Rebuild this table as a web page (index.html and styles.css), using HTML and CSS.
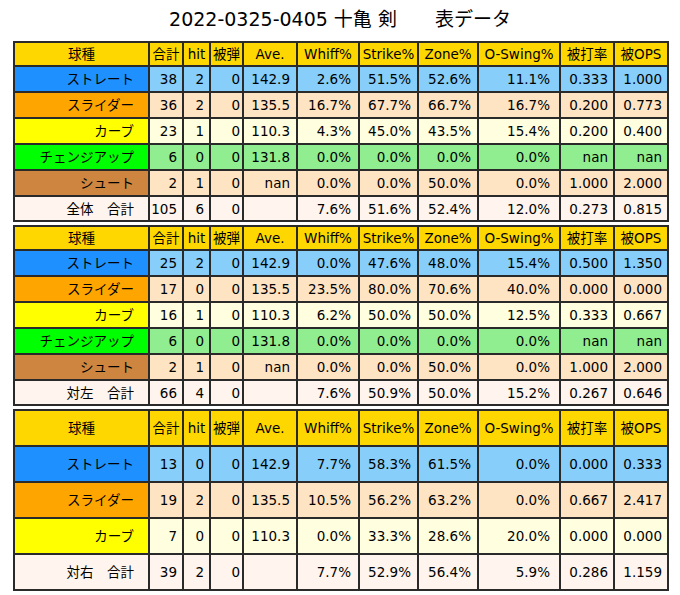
FILE: index.html
```html
<!DOCTYPE html>
<html lang="ja">
<head>
<meta charset="utf-8">
<title>2022-0325-0405 十亀 剣 表データ</title>
<link rel="stylesheet" href="styles.css">
</head>
<body>
<div class="page">
  <h1 class="title">2022-0325-0405 十亀 剣　　表データ</h1>
  <div class="tables">
    <table class="stats short">
      <colgroup>
        <col class="w-type"><col class="w-n"><col class="w-hit"><col class="w-hbp"><col class="w-ave"><col class="w-whiff"><col class="w-strike"><col class="w-zone"><col class="w-oswing"><col class="w-avg"><col class="w-ops">
      </colgroup>
      <tr class="head"><th>球種</th><th>合計</th><th>hit</th><th>被弾</th><th>Ave.</th><th>Whiff%</th><th>Strike%</th><th>Zone%</th><th>O-Swing%</th><th>被打率</th><th>被OPS</th></tr>
      <tr class="fb"><th>ストレート</th><td>38</td><td>2</td><td>0</td><td>142.9</td><td>2.6%</td><td>51.5%</td><td>52.6%</td><td>11.1%</td><td>0.333</td><td>1.000</td></tr>
      <tr class="sl"><th>スライダー</th><td>36</td><td>2</td><td>0</td><td>135.5</td><td>16.7%</td><td>67.7%</td><td>66.7%</td><td>16.7%</td><td>0.200</td><td>0.773</td></tr>
      <tr class="cb"><th>カーブ</th><td>23</td><td>1</td><td>0</td><td>110.3</td><td>4.3%</td><td>45.0%</td><td>43.5%</td><td>15.4%</td><td>0.200</td><td>0.400</td></tr>
      <tr class="ch"><th>チェンジアップ</th><td>6</td><td>0</td><td>0</td><td>131.8</td><td>0.0%</td><td>0.0%</td><td>0.0%</td><td>0.0%</td><td>nan</td><td>nan</td></tr>
      <tr class="sh"><th>シュート</th><td>2</td><td>1</td><td>0</td><td>nan</td><td>0.0%</td><td>0.0%</td><td>50.0%</td><td>0.0%</td><td>1.000</td><td>2.000</td></tr>
      <tr class="total last"><th>全体　合計</th><td>105</td><td>6</td><td>0</td><td></td><td>7.6%</td><td>51.6%</td><td>52.4%</td><td>12.0%</td><td>0.273</td><td>0.815</td></tr>
    </table>
    <table class="stats short">
      <colgroup>
        <col class="w-type"><col class="w-n"><col class="w-hit"><col class="w-hbp"><col class="w-ave"><col class="w-whiff"><col class="w-strike"><col class="w-zone"><col class="w-oswing"><col class="w-avg"><col class="w-ops">
      </colgroup>
      <tr class="head"><th>球種</th><th>合計</th><th>hit</th><th>被弾</th><th>Ave.</th><th>Whiff%</th><th>Strike%</th><th>Zone%</th><th>O-Swing%</th><th>被打率</th><th>被OPS</th></tr>
      <tr class="fb"><th>ストレート</th><td>25</td><td>2</td><td>0</td><td>142.9</td><td>0.0%</td><td>47.6%</td><td>48.0%</td><td>15.4%</td><td>0.500</td><td>1.350</td></tr>
      <tr class="sl"><th>スライダー</th><td>17</td><td>0</td><td>0</td><td>135.5</td><td>23.5%</td><td>80.0%</td><td>70.6%</td><td>40.0%</td><td>0.000</td><td>0.000</td></tr>
      <tr class="cb"><th>カーブ</th><td>16</td><td>1</td><td>0</td><td>110.3</td><td>6.2%</td><td>50.0%</td><td>50.0%</td><td>12.5%</td><td>0.333</td><td>0.667</td></tr>
      <tr class="ch"><th>チェンジアップ</th><td>6</td><td>0</td><td>0</td><td>131.8</td><td>0.0%</td><td>0.0%</td><td>0.0%</td><td>0.0%</td><td>nan</td><td>nan</td></tr>
      <tr class="sh"><th>シュート</th><td>2</td><td>1</td><td>0</td><td>nan</td><td>0.0%</td><td>0.0%</td><td>50.0%</td><td>0.0%</td><td>1.000</td><td>2.000</td></tr>
      <tr class="total last"><th>対左　合計</th><td>66</td><td>4</td><td>0</td><td></td><td>7.6%</td><td>50.9%</td><td>50.0%</td><td>15.2%</td><td>0.267</td><td>0.646</td></tr>
    </table>
    <table class="stats tall">
      <colgroup>
        <col class="w-type"><col class="w-n"><col class="w-hit"><col class="w-hbp"><col class="w-ave"><col class="w-whiff"><col class="w-strike"><col class="w-zone"><col class="w-oswing"><col class="w-avg"><col class="w-ops">
      </colgroup>
      <tr class="head"><th>球種</th><th>合計</th><th>hit</th><th>被弾</th><th>Ave.</th><th>Whiff%</th><th>Strike%</th><th>Zone%</th><th>O-Swing%</th><th>被打率</th><th>被OPS</th></tr>
      <tr class="fb"><th>ストレート</th><td>13</td><td>0</td><td>0</td><td>142.9</td><td>7.7%</td><td>58.3%</td><td>61.5%</td><td>0.0%</td><td>0.000</td><td>0.333</td></tr>
      <tr class="sl"><th>スライダー</th><td>19</td><td>2</td><td>0</td><td>135.5</td><td>10.5%</td><td>56.2%</td><td>63.2%</td><td>0.0%</td><td>0.667</td><td>2.417</td></tr>
      <tr class="cb"><th>カーブ</th><td>7</td><td>0</td><td>0</td><td>110.3</td><td>0.0%</td><td>33.3%</td><td>28.6%</td><td>20.0%</td><td>0.000</td><td>0.000</td></tr>
      <tr class="total"><th>対右　合計</th><td>39</td><td>2</td><td>0</td><td></td><td>7.7%</td><td>52.9%</td><td>56.4%</td><td>5.9%</td><td>0.286</td><td>1.159</td></tr>
    </table>
  </div>
</div>
</body>
</html>
```
FILE: styles.css
```css
html, body {
  margin: 0;
  padding: 0;
  background: #ffffff;
}

.page {
  width: 680px;
  font-family: "DejaVu Sans", "Noto Sans CJK JP", sans-serif;
  color: #000;
}

.title {
  margin: 0;
  height: 41px;
  box-sizing: border-box;
  padding-top: 7px;
  font-size: 19px;
  line-height: 24px;
  font-weight: normal;
  text-align: center;
  letter-spacing: 0;
}

.tables {
  display: flex;
  flex-direction: column;
  gap: 3px;
  padding-left: 13px;
}

.stats {
  border-collapse: collapse;
  table-layout: fixed;
  width: 654px;
  font-size: 13.5px;
  border: 2px solid #3c3c3c;
}

.stats th,
.stats td {
  border: 2px solid #2a2a2a;
  padding: 0;
  white-space: nowrap;
  overflow: hidden;
  font-weight: normal;
  line-height: 16px;
}

.w-type { width: 135px; }
.w-n { width: 34px; }
.w-hit { width: 27px; }
.w-hbp { width: 33px; }
.w-ave { width: 54px; }
.w-whiff { width: 62px; }
.w-strike { width: 59px; }
.w-zone { width: 60px; }
.w-oswing { width: 82px; }
.w-avg { width: 54px; }
.w-ops { width: 54px; }

.short tr { height: 26px; }
.short tr.head { height: 24px; }
.short tr.last { height: 25px; }
.tall tr { height: 36px; }
.tall tr.head { height: 36px; }

.head th {
  background: #ffd700;
  text-align: center;
}

.stats tr:not(.head) th {
  text-align: right;
  padding-right: 14px;
}

.stats td { text-align: right; padding-right: 5px; }
.stats td:nth-child(4) { padding-right: 2px; }
.stats td:nth-child(5) { padding-right: 6px; }
.stats td:nth-child(6) { padding-right: 7px; }
.stats td:nth-child(7) { padding-right: 6px; }
.stats td:nth-child(8) { padding-right: 6px; }
.stats td:nth-child(9) { padding-right: 9px; }
.stats td:nth-child(10) { padding-right: 5px; }
.stats td:nth-child(11) { padding-right: 5px; }

.fb th { background: #1e90ff; }
.fb td { background: #87cefa; }
.sl th { background: #ffa500; }
.sl td { background: #ffe4c4; }
.cb th { background: #ffff00; }
.cb td { background: #ffffe0; }
.ch th { background: #00ff00; }
.ch td { background: #90ee90; }
.sh th { background: #cd853f; }
.sh td { background: #ffe4c4; }
.total th,
.total td { background: #fff5ee; }
```
